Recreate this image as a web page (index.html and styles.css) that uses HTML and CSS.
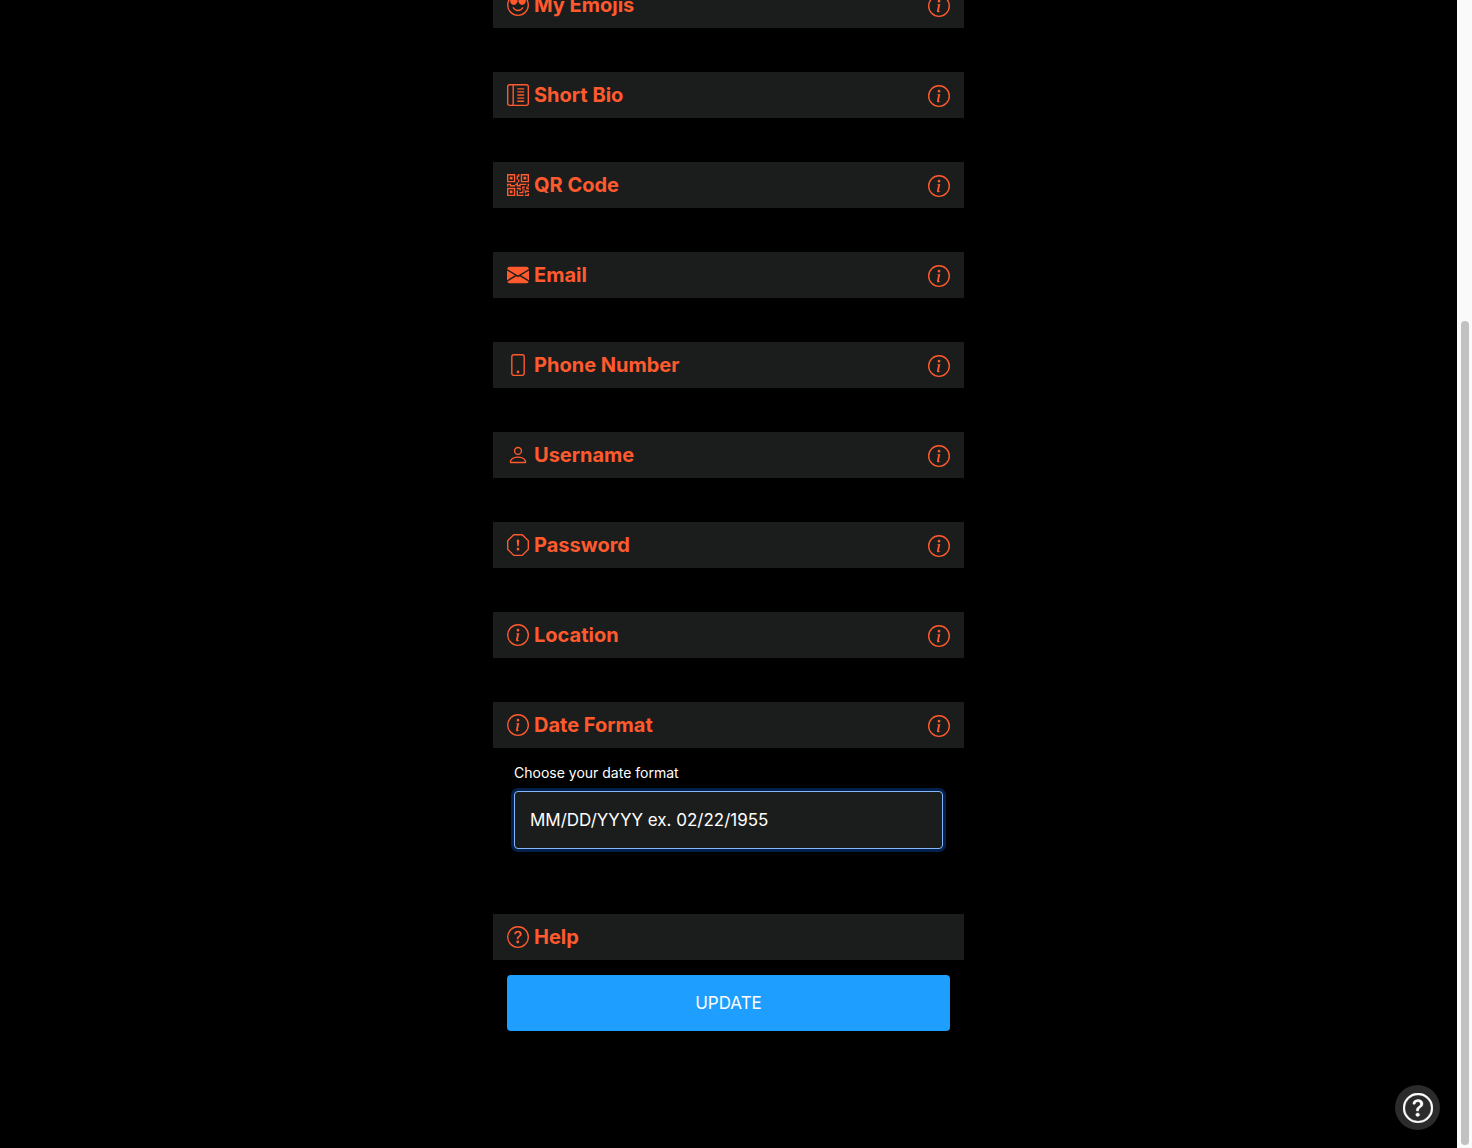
FILE: index.html
```html
<!DOCTYPE html>
<html lang="en">
<head>
  <meta charset="UTF-8">
  <meta name="viewport" content="width=device-width, initial-scale=1.0">
  <title>Settings</title>
  <link rel="stylesheet" href="styles.css">
</head>
<body>
  <svg class="sprite" aria-hidden="true">
    <symbol id="info" viewBox="0 0 16 16">
      <path d="M8 15A7 7 0 1 1 8 1a7 7 0 0 1 0 14zm0 1A8 8 0 1 0 8 0a8 8 0 0 0 0 16z"/>
      <path d="m8.930 6.588-2.290.287-.082.380.450.083c.294.070.352.176.288.469l-.738 3.468c-.194.897.105 1.319.808 1.319.545 0 1.178-.252 1.465-.598l.088-.416c-.200.176-.492.246-.686.246-.275 0-.375-.193-.304-.533L8.930 6.588zM9 4.500a1 1 0 1 1-2 0 1 1 0 0 1 2 0z"/>
    </symbol>
    <symbol id="question" viewBox="0 0 16 16">
      <path d="M8 15A7 7 0 1 1 8 1a7 7 0 0 1 0 14zm0 1A8 8 0 1 0 8 0a8 8 0 0 0 0 16z"/>
      <path d="M5.255 5.786a.237.237 0 0 0 .241.247h.825c.138 0 .248-.113.266-.25.09-.656.54-1.134 1.342-1.134.686 0 1.314.343 1.314 1.168 0 .635-.374.927-.965 1.371-.673.489-1.206 1.06-1.168 1.987l.003.217a.25.25 0 0 0 .25.246h.811a.25.25 0 0 0 .25-.25v-.105c0-.718.273-.927 1.010-1.486.609-.463 1.244-.977 1.244-2.056 0-1.511-1.276-2.241-2.673-2.241-1.267 0-2.655.59-2.750 2.286zm1.557 5.763c0 .533.425.927 1.010.927.609 0 1.028-.394 1.028-.927 0-.552-.42-.940-1.029-.940-.584 0-1.009.388-1.009.940z"/>
    </symbol>
  </svg>

  <div class="page">
    <main class="settings">
      <form class="list" onsubmit="event.preventDefault()">
        <section class="bar">
          <h2 class="title">
            <svg class="icon" viewBox="0 0 16 16">
              <path d="M8 15A7 7 0 1 1 8 1a7 7 0 0 1 0 14zm0 1A8 8 0 1 0 8 0a8 8 0 0 0 0 16z"/>
              <path d="M4.285 9.567a.5.5 0 0 1 .683.183A3.498 3.498 0 0 0 8 11.500a3.498 3.498 0 0 0 3.032-1.750.5.5 0 1 1 .866.500A4.498 4.498 0 0 1 8 12.500a4.498 4.498 0 0 1-3.898-2.250.5.5 0 0 1 .183-.683z"/>
              <path d="M2.300 4.800C2.300 4 3 3.700 4 3.700h2c.8 0 1.300.5 1.500 1.200.3-.2.700-.2 1 0 .2-.7.700-1.200 1.500-1.200h2c1 0 1.700.3 1.700 1.100C13.700 6.600 12.700 8 11 8S8.600 6.600 8.500 5.500h-1C7.400 6.600 6.700 8 5 8S2.300 6.600 2.300 4.800z"/>
            </svg>
            My Emojis
          </h2>
          <button type="button" class="info" aria-label="About My Emojis"><svg class="icon"><use href="#info"/></svg></button>
        </section>

        <section class="bar">
          <h2 class="title">
            <svg class="icon outline" viewBox="0 0 16 16">
              <rect x=".5" y=".5" width="15" height="15" rx="1.500"/>
              <path d="M4.500.5v15M7.500 3.500h5M7.500 5.750h5M7.500 8h5M7.500 10.250h5M7.500 12.500h5"/>
            </svg>
            Short Bio
          </h2>
          <button type="button" class="info" aria-label="About Short Bio"><svg class="icon"><use href="#info"/></svg></button>
        </section>

        <section class="bar">
          <h2 class="title">
            <svg class="icon" viewBox="0 0 16 16">
              <path d="M2 2h2v2H2V2Z"/>
              <path d="M6 0v6H0V0h6ZM5 1H1v4h4V1ZM4 12H2v2h2v-2Z"/>
              <path d="M6 10v6H0v-6h6Zm-5 1v4h4v-4H1Zm11-9h2v2h-2V2Z"/>
              <path d="M10 0v6h6V0h-6Zm5 1v4h-4V1h4ZM8 1V0h1v2H8v2H7V1h1Zm0 5V4h1v2H8ZM6 8V7h1V6h1v2h1V7h5v1h-4v1H7V8H6Zm0 0v1H2V8H1v1H0V7h3v1h3Zm10 1h-1V7h1v2Zm-1 0h-1v2h2v-1h-1V9Zm-4 0h2v1h-1v1h-1V9Zm2 3v-1h-1v1h-1v1H9v1h3v-2h1Zm0 0h3v1h-2v1h-1v-2Zm-4-1v1h1v-2H7v1h2Z"/>
              <path d="M7 12h1v3h4v1H7v-4Zm9 2v2h-3v-1h2v-1h1Z"/>
            </svg>
            QR Code
          </h2>
          <button type="button" class="info" aria-label="About QR Code"><svg class="icon"><use href="#info"/></svg></button>
        </section>

        <section class="bar">
          <h2 class="title">
            <svg class="icon" viewBox="0 0 16 16">
              <path d="M.05 3.555A2 2 0 0 1 2 2h12a2 2 0 0 1 1.950 1.555L8 8.414.05 3.555ZM0 4.697v7.104l5.803-3.558L0 4.697ZM6.761 8.830l-6.570 4.027A2 2 0 0 0 2 14h12a2 2 0 0 0 1.808-1.144l-6.570-4.027L8 9.586l-1.239-.757Zm3.436-.586L16 11.801V4.697l-5.803 3.546Z"/>
            </svg>
            Email
          </h2>
          <button type="button" class="info" aria-label="About Email"><svg class="icon"><use href="#info"/></svg></button>
        </section>

        <section class="bar">
          <h2 class="title">
            <svg class="icon" viewBox="0 0 16 16">
              <path d="M11 1a1 1 0 0 1 1 1v12a1 1 0 0 1-1 1H5a1 1 0 0 1-1-1V2a1 1 0 0 1 1-1h6zM5 0a2 2 0 0 0-2 2v12a2 2 0 0 0 2 2h6a2 2 0 0 0 2-2V2a2 2 0 0 0-2-2H5z"/>
              <path d="M8 14a1 1 0 1 0 0-2 1 1 0 0 0 0 2z"/>
            </svg>
            Phone Number
          </h2>
          <button type="button" class="info" aria-label="About Phone Number"><svg class="icon"><use href="#info"/></svg></button>
        </section>

        <section class="bar">
          <h2 class="title">
            <svg class="icon" viewBox="0 0 16 16">
              <path d="M8 8a3 3 0 1 0 0-6 3 3 0 0 0 0 6Zm2-3a2 2 0 1 1-4 0 2 2 0 0 1 4 0Zm4 8c0 1-1 1-1 1H3s-1 0-1-1 1-4 6-4 6 3 6 4Zm-1-.004c-.001-.246-.154-.986-.832-1.664C11.516 10.680 10.289 10 8 10c-2.290 0-3.516.680-4.168 1.332-.678.678-.830 1.418-.832 1.664h10Z"/>
            </svg>
            Username
          </h2>
          <button type="button" class="info" aria-label="About Username"><svg class="icon"><use href="#info"/></svg></button>
        </section>

        <section class="bar">
          <h2 class="title">
            <svg class="icon" viewBox="0 0 16 16">
              <path d="M4.540.146A.5.5 0 0 1 4.893 0h6.214a.5.5 0 0 1 .353.146l4.394 4.394a.5.5 0 0 1 .146.353v6.214a.5.5 0 0 1-.146.353l-4.394 4.394a.5.5 0 0 1-.353.146H4.893a.5.5 0 0 1-.353-.146L.146 11.460A.5.5 0 0 1 0 11.107V4.893a.5.5 0 0 1 .146-.353L4.540.146zM5.100 1 1 5.100v5.800L5.100 15h5.800l4.100-4.100V5.100L10.900 1H5.100z"/>
              <path d="M7.002 11a1 1 0 1 1 2 0 1 1 0 0 1-2 0zM7.100 4.995a.905.905 0 1 1 1.800 0l-.350 3.507a.552.552 0 0 1-1.100 0L7.100 4.995z"/>
            </svg>
            Password
          </h2>
          <button type="button" class="info" aria-label="About Password"><svg class="icon"><use href="#info"/></svg></button>
        </section>

        <section class="bar">
          <h2 class="title"><svg class="icon"><use href="#info"/></svg> Location</h2>
          <button type="button" class="info" aria-label="About Location"><svg class="icon"><use href="#info"/></svg></button>
        </section>

        <section>
          <div class="bar">
            <h2 class="title"><svg class="icon"><use href="#info"/></svg> Date Format</h2>
            <button type="button" class="info" aria-label="About Date Format"><svg class="icon"><use href="#info"/></svg></button>
          </div>
          <div class="field">
            <label for="date-format">Choose your date format</label>
            <select id="date-format" name="date-format">
              <option>MM/DD/YYYY ex. 02/22/1955</option>
            </select>
          </div>
        </section>

        <section>
          <div class="bar">
            <h2 class="title"><svg class="icon"><use href="#question"/></svg> Help</h2>
          </div>
          <div class="actions">
            <button type="submit" class="update">UPDATE</button>
          </div>
        </section>
      </form>
    </main>

    <button type="button" class="help-button" aria-label="Help"><svg viewBox="0 0 16 16"><use href="#question"/></svg></button>
  </div>

  <div class="scrollbar">
    <div class="thumb"></div>
  </div>
</body>
</html>
```

FILE: styles.css
```css
* {
  box-sizing: border-box;
}

body {
  display: flex;
  height: 100vh;
  margin: 0;
  overflow: hidden;
  background: #000;
  color: #fff;
  font-family: Inter, "Liberation Sans", sans-serif;
}

.sprite {
  display: none;
}

/* list is scrolled to its end, so the top runs out of view */
.page {
  flex: 1;
  display: flex;
  flex-direction: column;
  justify-content: flex-end;
  align-items: center;
  position: relative;
  overflow: hidden;
  padding-bottom: 117px;
}

.settings {
  flex-shrink: 0;
  width: 100%;
  max-width: 471px;
}

.list {
  display: flex;
  flex-direction: column;
  gap: 44px;
}

.bar {
  display: flex;
  align-items: center;
  justify-content: space-between;
  height: 46px;
  padding: 0 14px;
  background: #1b1d1c;
  color: #ff5a2e;
}

.title {
  display: flex;
  align-items: center;
  gap: 5px;
  margin: 0;
  font-size: 20px;
  font-weight: 700;
  line-height: 26px;
}

.icon {
  display: block;
  width: 22px;
  height: 22px;
  fill: currentColor;
}

.outline {
  fill: none;
  stroke: currentColor;
}

.info {
  padding: 2px 0 0;
  border: none;
  background: none;
  color: inherit;
  cursor: pointer;
}

.field {
  display: flex;
  flex-direction: column;
  gap: 8px;
  padding: 15px 21px 21px;
}

.field label {
  font-size: 14px;
  line-height: 20px;
}

.field select {
  appearance: none;
  width: 100%;
  height: 58px;
  padding: 0 15px;
  border: 1px solid #86b7fe;
  border-radius: 4px;
  background: #1b1d1c;
  box-shadow: 0 0 0 3px rgba(13, 110, 253, 0.3);
  color: #fff;
  font-family: inherit;
  font-size: 17px;
  outline: none;
}

.actions {
  padding: 15px 14px 0;
}

.update {
  display: block;
  width: 100%;
  height: 56px;
  border: none;
  border-radius: 4px;
  background: #1e9fff;
  color: #fff;
  font-family: inherit;
  font-size: 17px;
  cursor: pointer;
}

.help-button {
  display: flex;
  align-items: center;
  justify-content: center;
  position: absolute;
  right: 17px;
  bottom: 18px;
  width: 45px;
  height: 45px;
  padding: 0;
  border: none;
  border-radius: 50%;
  background: #2b2b2b;
  color: #fff;
  cursor: pointer;
}

.help-button svg {
  width: 30px;
  height: 30px;
  fill: currentColor;
  stroke: currentColor;
  stroke-width: 0.2;
}

.scrollbar {
  display: flex;
  flex-direction: column;
  justify-content: flex-end;
  align-items: center;
  width: 15px;
  padding-bottom: 3px;
  background: #fafafa;
}

.thumb {
  width: 8px;
  height: 72%;
  border-radius: 4px;
  background: #c1c1c1;
}
```
